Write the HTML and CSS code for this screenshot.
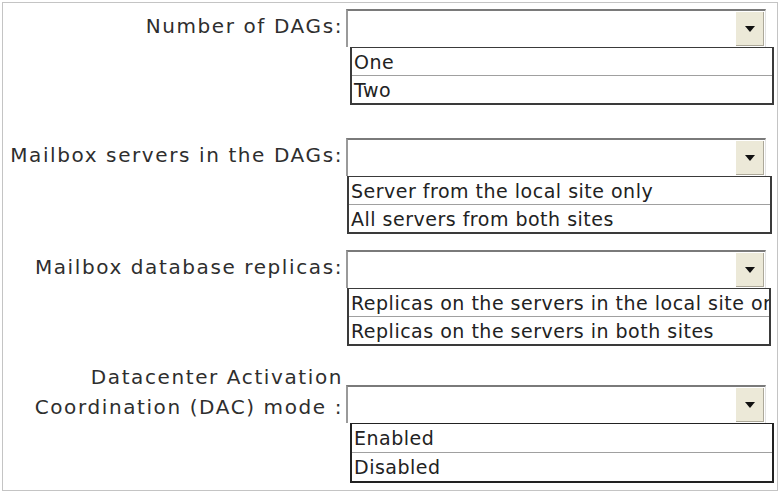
FILE: index.html
```html
<!DOCTYPE html>
<html lang="en">
<head>
  <meta charset="UTF-8">
  <meta name="viewport" content="width=device-width, initial-scale=1.0">
  <title>DAG configuration</title>
  <link rel="stylesheet" href="styles.css">
</head>
<body>
  <div class="frame">

    <div class="row row-1">
      <div class="label">Number of DAGs:</div>
      <div class="field">
        <div class="select"><span class="drop"><span class="arrow"></span></span></div>
        <ul class="options opt-1">
          <li>One</li>
          <li>Two</li>
        </ul>
      </div>
    </div>

    <div class="row row-2">
      <div class="label">Mailbox servers in the DAGs:</div>
      <div class="field">
        <div class="select"><span class="drop"><span class="arrow"></span></span></div>
        <ul class="options opt-2">
          <li>Server from the local site only</li>
          <li>All servers from both sites</li>
        </ul>
      </div>
    </div>

    <div class="row row-3">
      <div class="label">Mailbox database replicas:</div>
      <div class="field">
        <div class="select"><span class="drop"><span class="arrow"></span></span></div>
        <ul class="options opt-3">
          <li>Replicas on the servers in the local site only</li>
          <li>Replicas on the servers in both sites</li>
        </ul>
      </div>
    </div>

    <div class="row row-4">
      <div class="label label-2">Datacenter Activation<br>Coordination (DAC) mode :</div>
      <div class="field">
        <div class="select"><span class="drop"><span class="arrow"></span></span></div>
        <ul class="options opt-4">
          <li>Enabled</li>
          <li>Disabled</li>
        </ul>
      </div>
    </div>

  </div>
</body>
</html>
```

FILE: styles.css
```css
body {
  margin: 0;
  background: #fff;
  font-family: "DejaVu Sans", Verdana, sans-serif;
  color: #2e2e2e;
}

.frame {
  margin: 2px 4px 0 2px;
  height: 489px;
  border: 1px solid #c4c4c4;
  box-sizing: border-box;
}

.row {
  display: grid;
  grid-template-columns: 343px 420px;
  align-items: start;
}

.row-1 { margin-top: 6px; }
.row-2 { margin-top: 33px; }
.row-3 { margin-top: 16px; }
.row-4 { margin-top: 14px; }

.label {
  font-size: 20px;
  letter-spacing: 1.6px;
  text-align: right;
  padding-right: 3px;
  padding-top: 6px;
  line-height: 22px;
  white-space: nowrap;
}

.label-2 {
  line-height: 30px;
  padding-top: 2px;
}

.row-4 .field {
  margin-top: 25px;
}

.select {
  height: 38px;
  box-sizing: border-box;
  border-top: 2px solid #7a7a7a;
  border-left: 2px solid #9a9a9a;
  border-right: 1px solid #e2e2e2;
  background: #fff;
  display: flex;
  justify-content: flex-end;
  padding: 1px 1px 1px 0;
}

.drop {
  width: 27px;
  background: #ece9d8;
  border-right: 1px solid #aca899;
  border-bottom: 1px solid #aca899;
  display: flex;
  align-items: center;
  justify-content: center;
}

.arrow {
  width: 0;
  height: 0;
  border-left: 5px solid transparent;
  border-right: 5px solid transparent;
  border-top: 6px solid #111;
}

.options {
  list-style: none;
  margin: 0;
  padding: 0;
  border: 2px solid #3a3a3a;
  border-top-width: 1px;
  background: #fff;
  font-size: 19px;
  letter-spacing: 0.5px;
  color: #222;
  overflow: hidden;
}

.options li {
  height: 27px;
  line-height: 29px;
  padding-left: 2px;
  white-space: nowrap;
  overflow: hidden;
}

.options li + li {
  border-top: 1px solid #a0a0a0;
}

.opt-1 { margin-left: 4px; margin-right: -8px; }
.opt-2 { margin-left: 1px; margin-right: -6px; }
.opt-3 { margin-left: 1px; margin-right: -5px; }
.opt-4 { margin-left: 4px; margin-right: -8px; border-color: #222; }
.opt-4 li { height: 28px; }
```
